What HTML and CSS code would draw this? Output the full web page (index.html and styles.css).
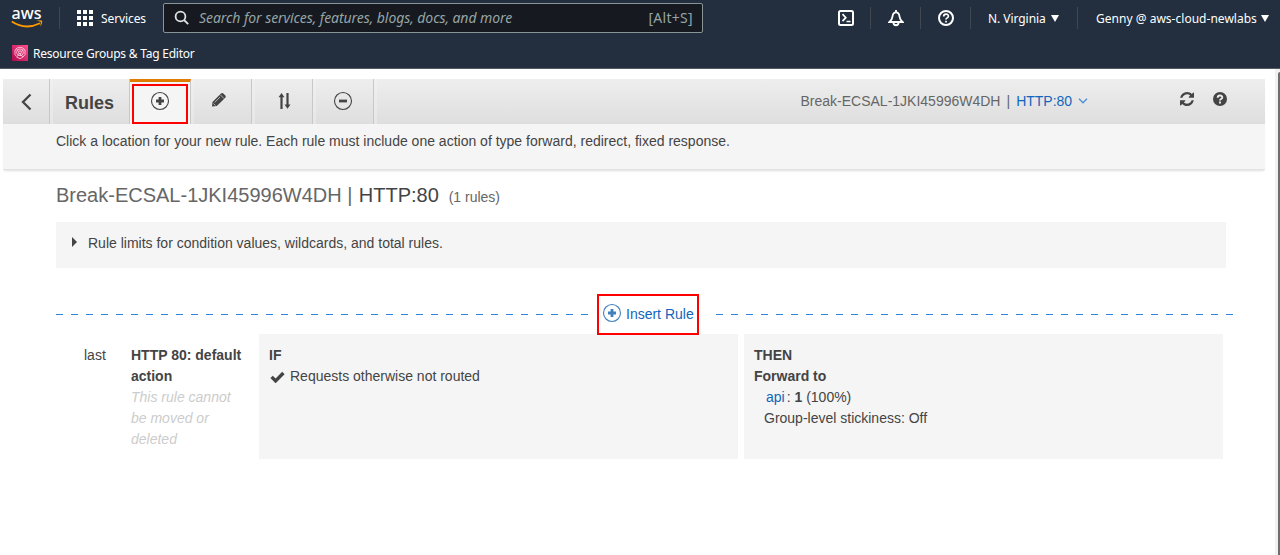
FILE: index.html
```html
<!DOCTYPE html>
<html lang="en">
<head>
<meta charset="utf-8">
<title>Rules</title>
<link rel="stylesheet" href="styles.css">
</head>
<body>
<header class="nav">
  <div class="nav-row">
    <svg class="logo" width="34" height="28" viewBox="0 -4 34 28"><text class="logo-text" x=".5" y="12.500" textLength="30" lengthAdjust="spacingAndGlyphs">aws</text><path d="M.8 15.500Q14 24.500 29 17.200" fill="none" stroke="#f90" stroke-width="1.800"/><path d="M25.500 14.800Q29 13.600 31.300 14.700Q31.600 17.600 29 20.500Q30 17.800 29.800 16Q28.300 15.200 25.500 14.800Z" fill="#f90"/></svg>
    <span class="divider d1"></span>
    <svg class="grid" width="16" height="16" fill="#fff"><path d="M0 0h4v4H0zM6 0h4v4H6zM12 0h4v4h-4zM0 6h4v4H0zM6 6h4v4H6zM12 6h4v4h-4zM0 12h4v4H0zM6 12h4v4H6zM12 12h4v4h-4z"/></svg>
    <span class="services">Services</span>
    <div class="search">
      <svg width="16" height="16" viewBox="0 0 16 16" fill="none" stroke="#dfe3e3" stroke-width="1.8"><circle cx="6.500" cy="6.500" r="4.900"/><path d="m10 10 4.200 4.200"/></svg>
      <span class="placeholder">Search for services, features, blogs, docs, and more</span>
      <span class="shortcut">[Alt+S]</span>
    </div>
    <div class="nav-icons">
      <svg width="16" height="16" viewBox="0 0 16 16" fill="none" stroke="#fff" stroke-width="2"><rect x="1" y="1" width="14" height="14" rx="1.500"/><path d="m4.500 4.200 3.300 3.500-3.300 3.500M8.500 11.500h4" stroke-width="1.700"/></svg>
      <span class="divider"></span>
      <svg width="16" height="17" viewBox="0 0 16 17" fill="none" stroke="#fff" stroke-width="1.800"><path d="M8 0v2M1.500 12h13c-2-1.700-2.600-3-2.900-5.200C11.300 4.300 10.400 2.400 8 2.400S4.700 4.300 4.400 6.800C4.100 9 3.500 10.300 1.500 12ZM5.300 12.400c.3 3.800 5.100 3.800 5.400 0"/></svg>
      <span class="divider"></span>
      <svg width="16" height="16" viewBox="0 0 16 16" fill="none" stroke="#fff" stroke-width="2"><circle cx="8" cy="8" r="7"/><path d="M5.700 6.500c0-3 4.700-3 4.700-.3 0 1.800-2.400 1.500-2.400 3.300M8 10.700v1.700" stroke-width="1.700"/></svg>
      <span class="divider"></span>
    </div>
    <span class="region">N. Virginia</span>
    <svg class="caret" width="8" height="7"><path d="M0 0h8L4 7z" fill="#fff"/></svg>
    <span class="divider d2"></span>
    <span class="account">Genny @ aws-cloud-newlabs</span>
    <svg class="caret" width="8" height="7"><path d="M0 0h8L4 7z" fill="#fff"/></svg>
  </div>
  <div class="fav-row">
    <svg class="fav-icon" width="16" height="16" viewBox="0 0 16 16"><defs><linearGradient id="pink" x1="0" y1="1" x2="1" y2="0"><stop stop-color="#b0084d"/><stop offset="1" stop-color="#ff4f8b"/></linearGradient></defs><path d="M0 0h16v16H0z" fill="url(#pink)"/><g fill="none" stroke="#ffd8e7" stroke-width=".8"><path d="M4.500 11.500 3 9.500V5l2-2 3-.7L11 3l2 2v4.500l-2 2.500-3 1.700L4.500 12"/><circle cx="8" cy="7.300" r="3.400"/><circle cx="8" cy="7.300" r="1.500"/><path d="m8 7.500-2.500 4M8 9l3 3M4.500 4.500l2 1.500M11.500 4.500l-2 1.500"/></g></svg>
    <span class="fav-text">Resource Groups &amp; Tag Editor</span>
  </div>
</header>
<div class="stage">
<main class="page">
  <section class="panel">
    <div class="toolbar">
      <div class="tab back"><svg width="12" height="18" viewBox="0 0 12 18"><path d="M10.500 1.500 3 9l7.500 7.500" fill="none" stroke="#444" stroke-width="2.300"/></svg></div>
      <div class="tab title">Rules</div>
      <div class="tab active"><div class="mark"><svg width="20" height="20" viewBox="0 0 20 20"><circle cx="10" cy="10" r="8.500" fill="none" stroke="#444" stroke-width="1.100"/><path d="M6 10h8M10 6v8" stroke="#444" stroke-width="2.800"/></svg></div></div>
      <div class="tab wide"><svg class="pencil" width="16" height="16" viewBox="0 0 16 16"><path d="M1 14.500 1.500 10 10 1.500q1.200-1 2.300 0l2 2q1 1.100 0 2.200L5.800 14.100Z" fill="#444"/><path d="m9.300 2.800 3.900 3.900M3.700 10.400 9 5.100M2.500 11.500l2 2" stroke="#e8e8e8" stroke-width=".7"/></svg></div>
      <div class="tab wide"><svg class="sort" width="14" height="18" viewBox="0 0 14 18"><path d="M3.500 17V4M9.500 1v12" stroke="#444" stroke-width="2.200"/><path d="M.5 5.200 3.500.9l3 4.300zM6.500 12.500h6l-3 4.300z" fill="#444"/></svg></div>
      <div class="tab wide"><svg class="minus" width="20" height="20" viewBox="0 0 20 20"><circle cx="10" cy="10" r="8.500" fill="none" stroke="#444" stroke-width="1.100"/><path d="M6 10h8" stroke="#444" stroke-width="2.800"/></svg></div>
      <div class="tools">
        <span class="lb">Break-ECSAL-1JKI45996W4DH</span><span class="bar">|</span><span class="link">HTTP:80</span>
        <svg class="chev" width="10" height="6" viewBox="0 0 10 6"><path d="m1 .8 4 4 4-4" fill="none" stroke="#4a90d4" stroke-width="1.300"/></svg>
        <svg class="refresh" width="14" height="14" viewBox="0 0 1536 1536"><path fill="#444" d="M1511 928q0 5-1 7-64 268-268 434.500T764 1536q-146 0-282.500-55T238 1324l-129 129q-19 19-45 19t-45-19-19-45V960q0-26 19-45t45-19h448q26 0 45 19t19 45-19 45l-137 137q71 66 161 102t187 36q134 0 250-65t186-179q11-17 53-117 8-23 30-23h192q13 0 22.500 9.500t9.500 22.500zm25-800v448q0 26-19 45t-45 19h-448q-26 0-45-19t-19-45 19-45l138-138Q969 256 768 256q-134 0-250 65T332 500q-11 17-53 117-8 23-30 23H50q-13 0-22.500-9.500T18 608v-7q65-268 270-434.500T768 0q146 0 284 55.500T1297 212l130-129q19-19 45-19t45 19 19 45z"/></svg>
        <svg class="help" width="14" height="14" viewBox="0 0 14 14"><circle cx="7" cy="7" r="7" fill="#444"/><path d="M4.700 5.700C4.700 2.700 9.300 2.800 9.300 5.400 9.300 7.200 7 6.900 7 8.500M7 9.600v2" fill="none" stroke="#eee" stroke-width="1.900"/></svg>
      </div>
    </div>
    <p class="hint">Click a location for your new rule. Each rule must include one action of type forward, redirect, fixed response.</p>
  </section>
  <h1 class="heading"><span class="muted">Break-ECSAL-1JKI45996W4DH |</span> <span class="port">HTTP:80</span> <small class="count">(1 rules)</small></h1>
  <div class="limits"><span class="tri"></span>Rule limits for condition values, wildcards, and total rules.</div>
  <div class="insert-row">
    <span class="dash left"></span>
    <div class="insert"><svg width="20" height="20" viewBox="0 0 20 20"><circle cx="10" cy="10" r="8.500" fill="none" stroke="#4180bd" stroke-width="1.100"/><path d="M6 10h8M10 6v8" stroke="#4180bd" stroke-width="2.800"/></svg><span>Insert Rule</span></div>
    <span class="dash right"></span>
  </div>
  <div class="rule">
    <div class="pos">last</div>
    <div class="name"><b>HTTP 80: default action</b><br><i>This rule cannot be moved or deleted</i></div>
    <div class="box if"><b>IF</b><div class="cond"><svg width="15" height="12" viewBox="0 0 15 12"><path d="m1.600 5.900 4 4L13.400 2" fill="none" stroke="#444" stroke-width="3.400"/></svg>Requests otherwise not routed</div></div>
    <div class="box then"><b>THEN</b><br><b>Forward to</b><div class="target"><span class="link">api</span><span class="colon">:</span> <b>1</b> (100%)</div><div class="sticky">Group-level stickiness: Off</div></div>
  </div>
</main>
<div class="scroll"><div class="thumb"></div></div>
</div>
</body>
</html>
```

FILE: styles.css
```css
* { box-sizing: border-box; }
body { margin: 0; height: 555px; overflow: hidden; background: #fff; color: #444; font: 14px/21px "Liberation Sans", Arial, sans-serif; }
svg { display: block; flex: none; }
span { white-space: nowrap; }

.nav { height: 69px; background: #232f3e; border-bottom: 1px solid #545b64; color: #fff; font: 12px/16px "Noto Sans", sans-serif; }
.nav-row { display: flex; align-items: center; height: 37px; }
.logo { margin: -5px 0 0 11px; overflow: visible; }
.logo-text { font: 500 17px "Noto Sans", sans-serif; fill: #fff; }
.divider { width: 1px; height: 22px; margin-top: -1px; background: #414750; flex: none; }
.d1 { margin-left: 14px; }
.grid { margin: -1px 0 0 17px; }
.services { width: 46px; margin: 1px 0 0 8px; letter-spacing: -.1px; }
.search { display: flex; align-items: center; width: 540px; height: 30px; margin: -1px 0 0 16px; padding: 0 9px 0 10px; background: #16191f; border: 1px solid #879596; border-radius: 2px; color: #95a5a6; font-size: 14px; }
.placeholder { margin-left: 9px; font-style: italic; letter-spacing: -.07px; }
.shortcut { margin-left: auto; letter-spacing: .3px; }
.nav-icons { display: flex; align-items: center; width: 133px; margin: -1px 0 0 135px; justify-content: space-between; }
.region { width: 56px; margin: 1px 0 0 17px; letter-spacing: -.05px; }
.caret { margin-left: 7px; }
.d2 { margin-left: 18px; }
.account { width: 158px; margin: 1px 0 0 18px; letter-spacing: .02px; }
.fav-row { display: flex; align-items: center; height: 31px; padding-left: 12px; }
.fav-icon { margin-top: 1px; }
.fav-text { margin: 3px 0 0 5px; letter-spacing: -.23px; }

.stage { display: flex; height: 486px; }
.page { width: 1275px; padding: 10px 10px 0 3px; }
.scroll { width: 5px; padding: 3px 0 0 3px; background: #f1f1f1; }
.thumb { height: 483px; background: #6e6e6e; border-radius: 2px 0 0; }

.panel { height: 91px; background: #f5f5f5; border-bottom: 1px solid #e3e3e3; box-shadow: 0 2px 2px -1px #ddd; }
.toolbar { display: flex; height: 45px; background: linear-gradient(#f0f0f0, #e6e6e6); }
.tab { display: flex; align-items: center; justify-content: center; flex: none; height: 45px; margin-right: 3px; background: linear-gradient(#eee, #dedede); border-right: 1px solid #c8c8c8; }
.back { width: 47px; }
.title { width: 77px; margin-right: 0; padding: 3px 3px 0 0; font-size: 18px; font-weight: bold; }
.active { width: 61px; padding-top: 2px; background: #f5f5f5; border-top: 3px solid #e07b00; }
.mark { display: flex; justify-content: center; width: 56px; height: 40px; padding-top: 5px; border: 2px solid #f00; }
.wide { width: 58px; }
.pencil { margin: -3px 7px 0 0; }
.sort { margin: -2px 0 0 3px; }
.minus { margin: -1px 3px 0 0; }
.tools { display: flex; flex: 1; background: linear-gradient(#eee, #dedede); padding: 12px 0 0 423.5px; }
.lb, .bar { color: #666; }
.bar { margin: 0 6px; }
.link { color: #1166bb; }
.chev { margin: 7px 0 0 6px; }
.refresh { margin: 1px 0 0 91.5px; }
.help { margin: 1px 0 0 19px; }
.hint { margin: 0; padding: 7px 0 0 53px; }

.heading { margin: 12px 0 0 53px; height: 26px; font-size: 20px; line-height: 26px; font-weight: normal; }
.muted { color: #666; }
.port { margin-left: .8px; }
.count { margin-left: 4.300px; font-size: 14px; color: #666; }
.limits { display: flex; align-items: flex-start; width: 1170px; height: 46px; margin: 14px 0 0 53px; padding: 11px 0 0 16px; background: #f5f5f5; }
.tri { width: 0; margin: 4px 11px 0 0; border: 5px solid transparent; border-left-color: #444; border-right: 0; }
.insert-row { position: relative; z-index: 1; display: flex; align-items: center; height: 41px; margin: 26px 0 0 53px; }
.dash { height: 1px; background: repeating-linear-gradient(90deg, #3184d6 0 7px, transparent 7px 15px); }
.left { width: 532px; }
.right { width: 517px; margin-left: 17px; }
.insert { display: flex; align-items: center; width: 102px; height: 41px; margin-left: 9px; padding: 0 0 1px 3px; border: 2px solid #f00; color: #1166bb; }
.insert svg { margin: -2px 4px 0 0; }

.rule { display: flex; height: 124px; margin-top: -1px; }
.pos { width: 128px; padding: 11px 0 0 81px; }
.name { width: 128px; padding: 11px 12px 0 0; }
.name i { color: #ccc; }
.box { height: 125px; padding: 11px 10px; background: #f5f5f5; }
.if { width: 479px; }
.then { width: 479px; margin-left: 6px; }
.cond { display: flex; align-items: center; gap: 5px; padding-left: 1px; }
.cond svg { margin-top: 1px; }
.target { padding-left: 12px; }
.colon { margin-left: 2px; }
.sticky { padding-left: 10px; }
```
